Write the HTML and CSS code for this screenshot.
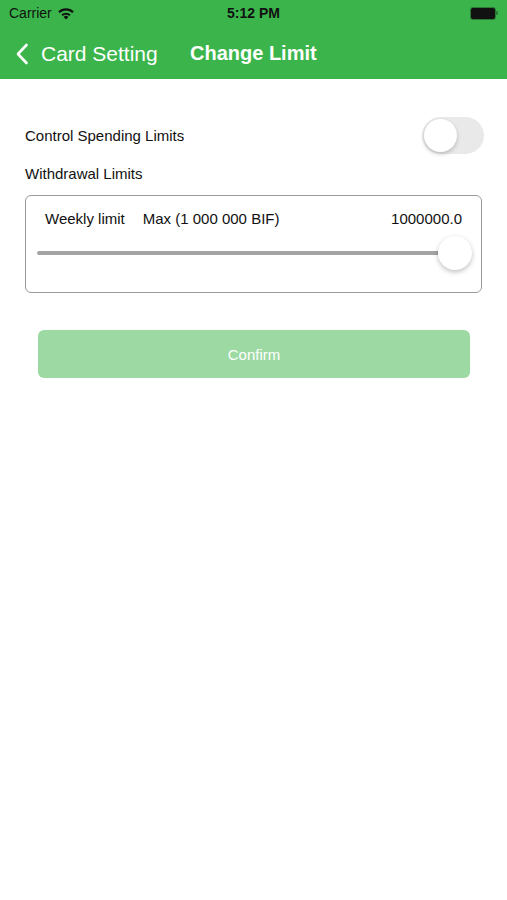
FILE: index.html
```html
<!DOCTYPE html>
<html lang="en">
<head>
  <meta charset="UTF-8">
  <meta name="viewport" content="width=device-width, initial-scale=1.0">
  <title>Change Limit</title>
  <link rel="stylesheet" href="styles.css">
</head>
<body>

<div class="header">
  <div class="status-bar">
    <div class="carrier">
      Carrier
      <svg class="wifi" width="18" height="13" viewBox="0 0 18 13">
        <path d="M9 12.5 L6.6 9.9 A3.4 3.4 0 0 1 11.4 9.9 Z" fill="#111"/>
        <path d="M4.3 7.6 A6.6 6.6 0 0 1 13.7 7.6 L12.3 9.1 A4.6 4.6 0 0 0 5.7 9.1 Z" fill="#111"/>
        <path d="M1.2 4.5 A11 11 0 0 1 16.8 4.5 L15.3 6 A8.9 8.9 0 0 0 2.7 6 Z" fill="#111"/>
      </svg>
    </div>
    <div class="time">5:12 PM</div>
    <div class="battery">
      <span class="battery-body"></span>
      <span class="battery-tip"></span>
    </div>
  </div>
  <div class="nav-bar">
    <div class="back">
      <svg width="14" height="22" viewBox="0 0 14 22">
        <path d="M11.5 2 L3 11 L11.5 20" fill="none" stroke="#fff" stroke-width="2.6" stroke-linecap="round" stroke-linejoin="round"/>
      </svg>
      <span>Card Setting</span>
    </div>
    <div class="title">Change Limit</div>
  </div>
</div>

<div class="content">
  <div class="row">
    <span class="label">Control Spending Limits</span>
    <span class="toggle"><span class="knob"></span></span>
  </div>
  <div class="section-title">Withdrawal Limits</div>
  <div class="limit-box">
    <div class="limit-head">
      <span class="limit-name">Weekly limit</span>
      <span class="limit-max">Max (1 000 000 BIF)</span>
      <span class="limit-value">1000000.0</span>
    </div>
    <div class="slider">
      <span class="track"></span>
      <span class="thumb"></span>
    </div>
  </div>
  <button class="confirm" disabled>Confirm</button>
</div>

</body>
</html>
```

FILE: styles.css
```css
body {
  font-family: "Liberation Sans", Arial, sans-serif;
  background-color: #fff;
  margin: 0;
  padding: 0;
  color: #111;
}
.header {
  background-color: #3bb54b;
  height: 79px;
}
.status-bar {
  height: 28px;
  display: flex;
  align-items: center;
  justify-content: space-between;
  padding: 0 9px;
  font-size: 14px;
}
.carrier {
  flex: 1;
  display: flex;
  align-items: center;
  gap: 5px;
  margin-top: -2px;
}
.time {
  font-weight: bold;
  margin-top: -2px;
}
.battery {
  flex: 1;
  display: flex;
  justify-content: flex-end;
  align-items: center;
  margin-top: -2px;
}
.battery-body {
  width: 24px;
  height: 11px;
  background-color: #111;
  border-radius: 3px;
  border: 1px solid #2c7a36;
}
.battery-tip {
  width: 2px;
  height: 4px;
  background-color: #2c7a36;
  border-radius: 0 1px 1px 0;
}
.nav-bar {
  height: 51px;
  display: flex;
  align-items: center;
  color: #fff;
  font-size: 20px;
}
.back {
  display: flex;
  align-items: center;
  padding-left: 15px;
  gap: 12px;
  width: 175px;
  font-size: 21px;
}
.title {
  font-weight: bold;
}
.content {
  padding: 0 25px;
}
.row {
  display: flex;
  justify-content: space-between;
  align-items: center;
  margin-top: 38px;
}
.label {
  font-size: 15px;
}
.toggle {
  width: 62px;
  height: 37px;
  background-color: #e9e9ea;
  border-radius: 19px;
  position: relative;
  margin-right: -2px;
}
.knob {
  position: absolute;
  top: 2px;
  left: 2px;
  width: 33px;
  height: 33px;
  border-radius: 50%;
  background-color: #fff;
  box-shadow: 0 2px 4px rgba(0, 0, 0, 0.2);
}
.section-title {
  font-size: 15px;
  margin-top: 11px;
}
.limit-box {
  margin-top: 13px;
  height: 98px;
  border: 1px solid #9a9a9a;
  border-radius: 6px;
  box-sizing: border-box;
  padding: 14px 19px 0 11px;
}
.limit-head {
  display: flex;
  font-size: 15px;
  padding-left: 8px;
}
.limit-name {
  margin-right: 18px;
}
.limit-value {
  margin-left: auto;
}
.slider {
  position: relative;
  height: 36px;
  margin-top: 8px;
}
.track {
  position: absolute;
  left: 0;
  right: 10px;
  top: 16px;
  height: 4px;
  border-radius: 2px;
  background-color: #a3a3a3;
}
.thumb {
  position: absolute;
  right: -10px;
  top: 1px;
  width: 34px;
  height: 34px;
  border-radius: 50%;
  background-color: #fff;
  box-shadow: 0 2px 5px rgba(0, 0, 0, 0.25);
}
.confirm {
  display: block;
  margin: 37px 12px 0 13px;
  width: calc(100% - 25px);
  height: 48px;
  background-color: #9cd9a3;
  color: #fff;
  border: none;
  border-radius: 6px;
  font-family: inherit;
  font-size: 15px;
}
```
